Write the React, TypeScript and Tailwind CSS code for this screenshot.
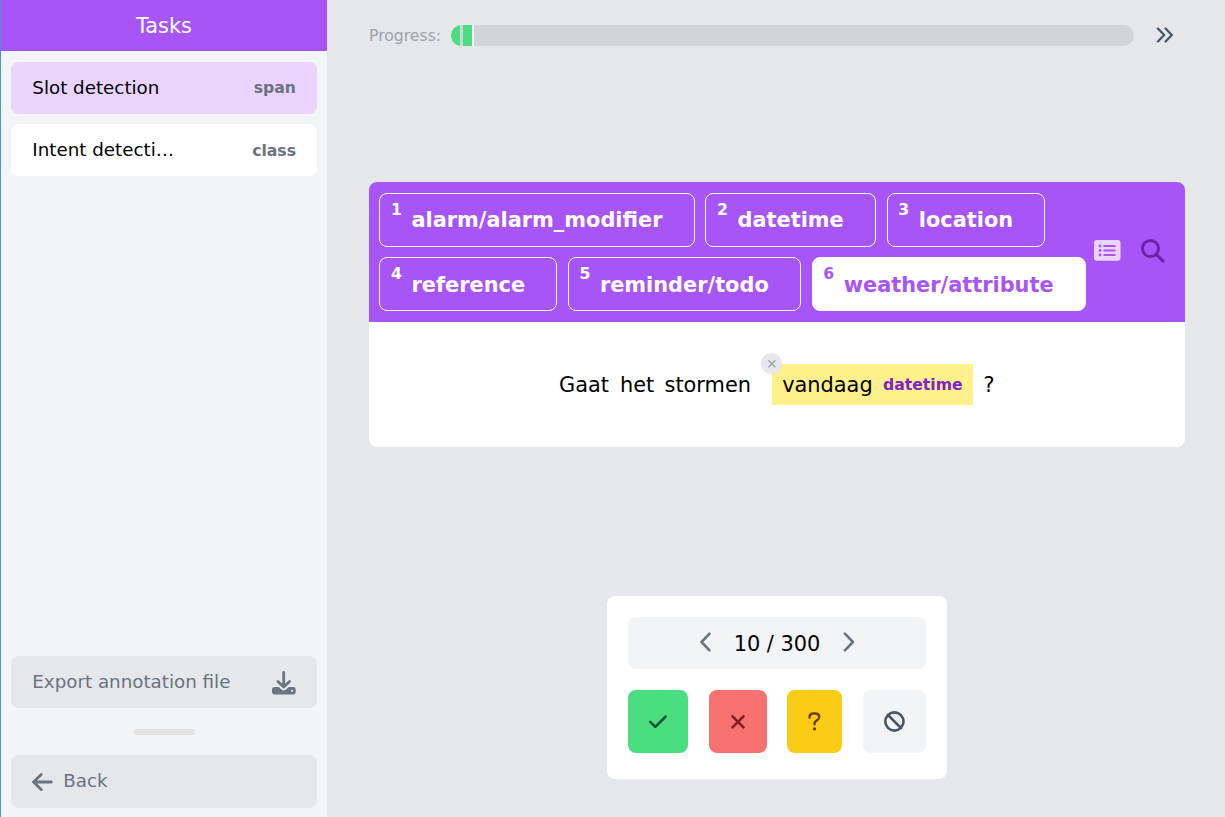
import React from "react";

type IconProps = { w: number; h: number; sw?: number; className?: string; children: React.ReactNode };

function Icon({ w, h, sw = 2.6, className = "", children }: IconProps) {
  return (
    <svg
      width={w}
      height={h}
      viewBox={`0 0 ${w} ${h}`}
      fill="none"
      stroke="currentColor"
      strokeWidth={sw}
      strokeLinecap="round"
      strokeLinejoin="round"
      className={`block shrink-0 ${className}`}
    >
      {children}
    </svg>
  );
}

type Label = { n: number; name: string; size: string; pad: string; active?: boolean };

const rows: Label[][] = [
  [
    { n: 1, name: "alarm/alarm_modifier", size: "w-[316px]", pad: "pl-[11px]" },
    { n: 2, name: "datetime", size: "w-[171px]", pad: "pl-[11px]" },
    { n: 3, name: "location", size: "ml-[1px] w-[158px]", pad: "pl-[10.3px]" },
  ],
  [
    { n: 4, name: "reference", size: "w-[178px]", pad: "pl-[11px]" },
    { n: 5, name: "reminder/todo", size: "ml-[1px] w-[233px]", pad: "pl-[10.4px]" },
    { n: 6, name: "weather/attribute", size: "ml-[1px] w-[274px]", pad: "pl-[10.2px]", active: true },
  ],
];

function LabelButton({ n, name, size, pad, active }: Label) {
  return (
    <button
      className={`flex h-[54px] shrink-0 items-start whitespace-nowrap rounded-[8px] border border-white text-left font-bold ${pad} ${size} ${
        active ? "bg-white text-[#a855f7]" : "text-white"
      }`}
    >
      <span className="mt-[6px] w-[20.5px] text-[15.66px] leading-[20px]">{n}</span>
      <span className={`${n > 3 ? "mt-[13px]" : "mt-[12px]"} text-[20.88px] leading-[28px]`}>{name}</span>
    </button>
  );
}

function Sidebar() {
  return (
    <aside className="flex h-full w-[327px] shrink-0 flex-col border-l border-[#4a90e2] bg-[#f3f4f6]">
      <h1 className="flex h-[51px] items-center justify-center bg-[#a855f7] pt-[2px] text-[20.88px] text-white">
        Tasks
      </h1>
      <nav className="flex flex-col gap-[10px] px-[10px] pt-[11px]">
        <button className="flex h-[52px] items-center justify-between rounded-[8px] bg-[#e9d5ff] px-[21px]">
          <span className="pl-[0.3px] text-[18.27px]">Slot detection</span>
          <span className="text-[15.66px] font-bold text-[#6b7280]">span</span>
        </button>
        <button className="flex h-[52px] items-center justify-between rounded-[8px] bg-white px-[21px]">
          <span className="pl-[0.3px] text-[18.27px]">Intent detecti…</span>
          <span className="pt-[2px] text-[15.66px] font-bold text-[#6b7280]">class</span>
        </button>
      </nav>
      <div className="mt-auto flex flex-col px-[10px] pb-[9px] text-[18.27px] text-[#6b7280]">
        <button className="flex h-[52px] items-center justify-between rounded-[8px] bg-[#e5e7eb] pl-[21px] pr-[21px]">
          <span className="pl-[0.3px]">Export annotation file</span>
          <Icon w={24} h={24} sw={2.8} className="mt-[2px]">
            <path d="M11.7 1.5V15.6M5.9 10.4l5.8 5.5 5.8-5.5" />
            <path
              d="M2.8 16H6.7l2.7 2.6q2.3 2 4.6 0L16.8 16h4.2Q23.7 16 23.7 18.8v2Q23.7 23.6 21 23.6H2.8Q0 23.6 0 20.8v-2Q0 16 2.8 16Z"
              fill="currentColor"
              stroke="none"
            />
            <circle cx="20" cy="19.8" r="1.1" fill="#e5e7eb" stroke="none" />
          </Icon>
        </button>
        <div className="my-[21px] h-[6px] w-[61px] self-center rounded-[3px] bg-[#e2e2e2]" />
        <button className="mt-[-1px] flex h-[53px] items-center rounded-[8px] bg-[#e5e7eb] pb-[2px] pl-[21px]">
          <Icon w={21} h={18} sw={2.8} className="mr-[10.3px] mt-[2px]">
            <path d="M9.2 1.5 1.5 9l7.7 7.5M2 9h17.3" />
          </Icon>
          <span>Back</span>
        </button>
      </div>
    </aside>
  );
}

function Progress() {
  return (
    <div className="flex h-[21px] w-[816px] items-center">
      <span className="w-[82px] text-[15.66px] text-[#9ca3af]">Progress:</span>
      <div className="flex h-[21px] w-[683px] overflow-hidden rounded-full bg-[#d1d5db]">
        <div className="w-[9px] bg-[#4ade80]" />
        <div className="w-[3px] bg-[#d1d5db]" />
        <div className="w-[9px] bg-[#4ade80]" />
        <div className="w-[2px] bg-white" />
      </div>
      <Icon w={18} h={16} sw={2.3} className="ml-[22px] mt-[-2px] text-[#4b5563]">
        <path d="M1.9 1.5 8.2 8l-6.3 6.5M9.6 1.5 15.8 8l-6.2 6.5" />
      </Icon>
    </div>
  );
}

function Annotator() {
  return (
    <section className="mt-[136px] flex h-[265px] w-[816px] flex-col overflow-hidden rounded-[8px] bg-white">
      <header className="flex h-[140px] bg-[#a855f7] pl-[10px] pt-[11px]">
        <div className="flex w-[715px] shrink-0 flex-col gap-[10px]">
          {rows.map((row, i) => (
            <div key={i} className="flex gap-[10px]">
              {row.map((l) => (
                <LabelButton key={l.n} {...l} />
              ))}
            </div>
          ))}
        </div>
        <div className="flex h-[116px] items-center">
          <Icon w={27} h={21} sw={2.2} className="mt-[-1px] text-[#e9d5ff]">
            <rect width="26.5" height="20.8" rx="2.8" fill="currentColor" stroke="none" />
            <path d="M10.3 6H20.7M10.3 10.5H20.7M10.3 15H20.7" stroke="#a855f7" />
            <path d="M6 6h.01M6 10.5h.01M6 15h.01" stroke="#a855f7" strokeWidth="2.8" />
          </Icon>
          <Icon w={24} h={24} sw={2.9} className="ml-[20px] text-[#6b21a8]">
            <circle cx="9.5" cy="9.5" r="8" />
            <path d="m15.4 15.4 6.7 6.7" />
          </Icon>
        </div>
      </header>
      <div className="flex h-[125px] items-center whitespace-nowrap pl-[190px] text-[20.88px]">
        <span className="w-[61px] pt-[2px]">Gaat</span>
        <span className="w-[44.5px] pt-[2px]">het</span>
        <span className="w-[107.5px] pt-[2px]">stormen</span>
        <span className="relative flex h-[41px] w-[201px] items-center bg-[#fef08a] pl-[10.2px]">
          <span className="w-[100.8px] pt-[2px]">vandaag</span>
          <span className="text-[15.66px] font-bold text-[#7e22ce]">datetime</span>
          <button className="absolute left-[-11px] top-[-11px] flex h-[21px] w-[21px] items-center justify-center rounded-full bg-[#e5e7eb] text-[#9ca3af]">
            <Icon w={8} h={8} sw={1.5} className="ml-[1px]">
              <path d="m.9.8 6 6m0-6-6 6" />
            </Icon>
          </button>
        </span>
        <span className="ml-[10.5px] pt-[2px]">?</span>
      </div>
    </section>
  );
}

function Controls() {
  return (
    <section className="mt-[149px] flex h-[183px] w-[340px] flex-col self-center rounded-[8px] bg-white p-[21px]">
      <div className="flex h-[52px] shrink-0 items-center justify-center rounded-[8px] bg-[#f3f4f6] text-[20.88px]">
        <Icon w={12} h={20} sw={2.6} className="mt-[-2px] text-[#6b7280]">
          <path d="M9.5 1.7 1.5 10l8 8.3" />
        </Icon>
        <span className="w-[131px] pt-[3px] text-center">10 / 300</span>
        <Icon w={12} h={20} sw={2.6} className="mt-[-2px] text-[#6b7280]">
          <path d="M1.9 1.7 9.9 10l-8 8.3" />
        </Icon>
      </div>
      <div className="mt-[21px] flex h-[63px] shrink-0">
        <button className="flex w-[60px] items-center justify-center rounded-[8px] bg-[#4ade80] text-[#14532d]">
          <Icon w={18} h={14} sw={2.5}>
            <path d="m1.3 6.8 5 5L16.7 1.5" />
          </Icon>
        </button>
        <button className="ml-[21px] flex w-[58px] items-center justify-center rounded-[8px] bg-[#f87171] text-[#7f1d1d]">
          <Icon w={14} h={14} sw={2.5}>
            <path d="m1.5 1.3 11 11m0-11-11 11" />
          </Icon>
        </button>
        <button className="ml-[20px] flex w-[55px] items-center justify-center rounded-[8px] bg-[#facc15] text-[#713f12]">
          <Icon w={13} h={19} sw={2.5}>
            <path d="M1.6 5.5V5Q1.6 1.5 5.2 1.5h2.2q3.8 0 3.8 3.5 0 2.1-2 3.3L7.9 9.1Q6.5 9.9 6.5 11.4v.8" />
            <circle cx="6.5" cy="16.9" r="1.7" fill="currentColor" stroke="none" />
          </Icon>
        </button>
        <button className="ml-[21px] flex w-[63px] items-center justify-center rounded-[8px] bg-[#f3f4f6] text-[#4b5563]">
          <Icon w={21} h={21} sw={2.6}>
            <circle cx="10.4" cy="10.5" r="9.1" />
            <path d="m4 4 13 13" />
          </Icon>
        </button>
      </div>
    </section>
  );
}

export default function App() {
  return (
    <div className="flex h-[817px] w-[1225px] overflow-hidden bg-[#e5e7eb] font-['DejaVu_Sans',sans-serif] text-black">
      <Sidebar />
      <main className="flex w-[898px] flex-col pl-[42px] pr-[40px] pt-[25px]">
        <Progress />
        <Annotator />
        <Controls />
      </main>
    </div>
  );
}
